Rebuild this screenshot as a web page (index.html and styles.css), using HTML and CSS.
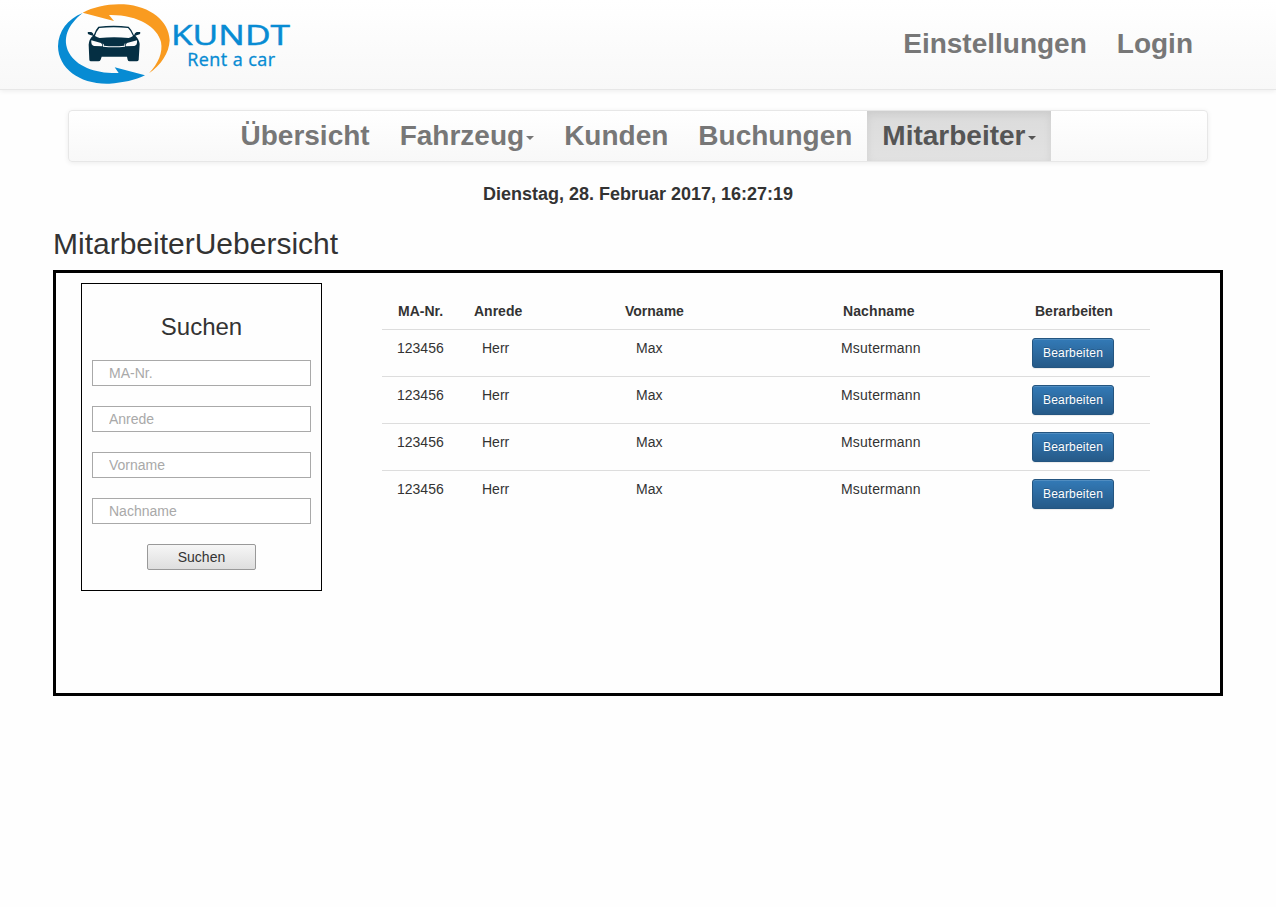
FILE: index.html
```html
<!DOCTYPE html>
<html lang="de">
<head>
<meta charset="utf-8">
<title>MitarbeiterUebersicht</title>
<link rel="stylesheet" href="styles.css">
</head>
<body>
<header class="topbar">
  <a class="brand">
    <svg class="logo" viewBox="0 0 735 267" role="img" aria-label="Kundt Rent a car">
      <path class="logo-blue" d="M98 39C52 57 25 94 24 139C25 207 91 254 178 251C219 248 256 241 285 226L194 202L206 219C138 221 80 200 57 158C36 118 52 75 98 39Z"/>
      <path class="logo-orange" d="M98 38C133 19 180 10 222 13C302 19 357 63 359 121C357 160 334 194 297 220C325 190 339 158 333 126C323 81 262 43 177 45L192 63Z"/>
      <path class="logo-car" fill-rule="evenodd" d="M145 80Q191 75 236 80Q246 89 252 106Q254 98 260 96H270Q273 99 269 103Q262 106 256 107Q267 117 269 132L266 180Q265 184 260 184H239Q234 184 233 179L231 170H155L152 179Q150 184 145 184H123Q118 184 118 179L116 134Q117 117 129 107Q120 106 115 103Q111 99 114 96H124Q130 98 131 106Q136 89 145 80ZM148 84Q139 94 135 108Q143 112 149 114Q192 109 236 114Q242 112 249 108Q242 91 234 84Q191 80 148 84ZM124 121Q122 136 132 138L157 139Q159 134 153 129ZM261 121Q263 136 253 138L227 139Q225 134 231 129ZM158 130Q160 135 159 140Q192 144 225 140Q224 135 226 130L223 132Q225 135 222 137Q192 141 162 137Q163 134 158 130Z"/>
      <text class="logo-name" x="363" y="134" textLength="357" lengthAdjust="spacingAndGlyphs">KUNDT</text>
      <text class="logo-sub" x="412" y="198" textLength="263" lengthAdjust="spacing">Rent a car</text>
    </svg>
  </a>
  <nav class="user-nav"><a>Einstellungen</a><a>Login</a></nav>
</header>
<nav class="main-nav">
  <a>Übersicht</a>
  <a>Fahrzeug<span class="caret"></span></a>
  <a>Kunden</a>
  <a>Buchungen</a>
  <a class="active">Mitarbeiter<span class="caret"></span></a>
</nav>
<p class="clock">Dienstag, 28. Februar 2017, 16:27:19</p>
<main class="content">
  <h2 class="title">MitarbeiterUebersicht</h2>
  <section class="panel">
    <form class="search">
      <h3 class="search-title">Suchen</h3>
      <input class="field" type="text" placeholder="MA-Nr.">
      <input class="field" type="text" placeholder="Anrede">
      <input class="field" type="text" placeholder="Vorname">
      <input class="field" type="text" placeholder="Nachname">
      <button class="search-button" type="button">Suchen</button>
    </form>
    <table class="staff">
      <colgroup><col class="col-nr"><col class="col-anrede"><col class="col-vorname"><col class="col-nachname"><col class="col-edit"></colgroup>
      <thead><tr><th class="nr">MA-Nr.</th><th class="anrede">Anrede</th><th class="vorname">Vorname</th><th class="nachname">Nachname</th><th class="edit">Berarbeiten</th></tr></thead>
      <tbody>
        <tr><td class="nr">123456</td><td class="anrede">Herr</td><td class="vorname">Max</td><td class="nachname">Msutermann</td><td class="edit"><button class="btn" type="button">Bearbeiten</button></td></tr>
        <tr><td class="nr">123456</td><td class="anrede">Herr</td><td class="vorname">Max</td><td class="nachname">Msutermann</td><td class="edit"><button class="btn" type="button">Bearbeiten</button></td></tr>
        <tr><td class="nr">123456</td><td class="anrede">Herr</td><td class="vorname">Max</td><td class="nachname">Msutermann</td><td class="edit"><button class="btn" type="button">Bearbeiten</button></td></tr>
        <tr><td class="nr">123456</td><td class="anrede">Herr</td><td class="vorname">Max</td><td class="nachname">Msutermann</td><td class="edit"><button class="btn" type="button">Bearbeiten</button></td></tr>
      </tbody>
    </table>
  </section>
</main>
</body>
</html>
```

FILE: styles.css
```css
* { box-sizing: border-box; }
body {
  margin: 0;
  background: #fefefe;
  color: #333;
  font: 14px/20px "Liberation Sans", Arial, sans-serif;
}
.topbar {
  display: flex;
  justify-content: space-between;
  height: 90px;
  padding: 0 68px 0 50px;
  border-bottom: 1px solid #e7e7e7;
  background: linear-gradient(#fff, #f8f8f8);
  box-shadow: 0 1px 5px rgba(0, 0, 0, .075);
}
.logo { display: block; width: 245px; height: 89px; }
.logo-blue { fill: #078bd3; }
.logo-orange { fill: #f99b20; }
.logo-car { fill: #052f43; }
.logo-name { fill: #078bd3; stroke: #078bd3; stroke-width: 1.5px; font: 84px "Open Sans", sans-serif; }
.logo-sub { fill: #078bd3; stroke: #078bd3; stroke-width: 1px; font: 54px "Open Sans", sans-serif; }
.user-nav { display: flex; padding-top: 19px; }
.user-nav a, .main-nav a {
  padding: 0 15px;
  color: #777;
  font-size: 28px;
  font-weight: bold;
  line-height: 50px;
  white-space: nowrap;
}
.main-nav {
  display: flex;
  justify-content: center;
  height: 52px;
  margin: 20px 68px 0;
  border: 1px solid #e7e7e7;
  border-radius: 4px;
  background: linear-gradient(#fff, #f8f8f8);
  box-shadow: 0 1px 5px rgba(0, 0, 0, .075);
}
.main-nav .active {
  color: #555;
  background: linear-gradient(#dbdbdb, #e2e2e2);
  box-shadow: inset 0 3px 9px rgba(0, 0, 0, .075);
}
.caret {
  display: inline-block;
  margin-left: 2px;
  vertical-align: middle;
  border: 4px solid transparent;
  border-top-color: currentColor;
  border-bottom: 0;
}
.clock {
  margin: 22px 0 0;
  text-align: center;
  font-size: 18px;
  font-weight: bold;
}
.content { padding: 0 53px; }
.title {
  margin: 23px 0 10px;
  font-size: 30px;
  font-weight: normal;
  line-height: 33px;
}
.panel {
  display: flex;
  align-items: flex-start;
  gap: 60px;
  height: 426px;
  padding: 10px 25px;
  border: 3px solid #000;
}
.search {
  display: flex;
  flex-direction: column;
  align-items: center;
  gap: 20px;
  width: 241px;
  height: 308px;
  padding: 30px 10px 20px;
  border: 1px solid #000;
}
.search-title {
  margin: 0;
  font-size: 24px;
  font-weight: normal;
  line-height: 26px;
}
.field {
  width: 219px;
  height: 26px;
  padding: 0 16px;
  border: 1px solid #a9a9a9;
  background: #fff;
  font: 14px "Liberation Sans", Arial, sans-serif;
}
.field::placeholder { color: #a9a9a9; opacity: 1; }
.search-button {
  width: 109px;
  height: 26px;
  padding: 0;
  border: 1px solid #999;
  border-radius: 2px;
  background: linear-gradient(#f6f6f6, #dedede);
  color: #333;
  font: 14px "Liberation Sans", Arial, sans-serif;
}
.staff {
  width: 768px;
  margin-top: 10px;
  border-collapse: collapse;
  table-layout: fixed;
}
.col-nr { width: 77px; }
.col-anrede { width: 151px; }
.col-vorname { width: 218px; }
.col-nachname { width: 191px; }
.staff th, .staff td { padding: 8px 0; text-align: left; vertical-align: top; }
.staff th { border-bottom: 1px solid #ddd; }
.staff tr + tr td { border-top: 1px solid #ddd; }
.staff td.nr { padding-left: 15px; }
.staff th.nr { padding-left: 16px; }
.staff th.anrede { padding-left: 15px; }
.staff td.anrede { padding-left: 23px; }
.staff th.vorname { padding-left: 15px; }
.staff td.vorname { padding-left: 26px; }
.staff th.nachname { padding-left: 15px; letter-spacing: .1px; }
.staff td.nachname { padding-left: 13px; letter-spacing: .2px; }
.staff th.edit { padding-left: 16px; }
.staff td.edit { padding-left: 13px; }
.btn {
  display: block;
  width: 82px;
  height: 30px;
  padding: 0;
  border: 1px solid #245580;
  border-radius: 3px;
  background: linear-gradient(#337ab7, #265a88);
  box-shadow: inset 0 1px 0 rgba(255, 255, 255, .15), 0 1px 1px rgba(0, 0, 0, .075);
  color: #fff;
  font: 12px/18px "Liberation Sans", Arial, sans-serif;
  letter-spacing: .2px;
  text-shadow: 0 -1px 0 rgba(0, 0, 0, .2);
}
```
